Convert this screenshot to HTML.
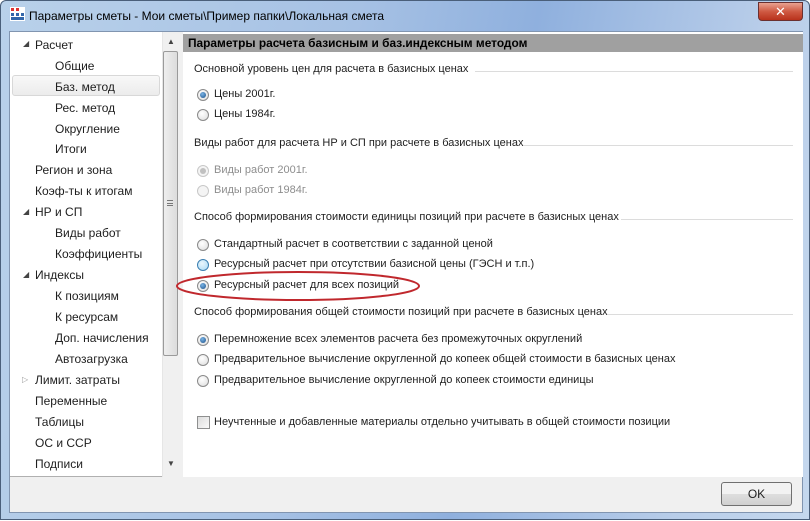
<!DOCTYPE html>
<html><head><meta charset="utf-8"><style>
*{margin:0;padding:0;box-sizing:border-box}
body{width:810px;height:520px;overflow:hidden;font-family:"Liberation Sans","DejaVu Sans",sans-serif;font-size:11px;color:#1e1e1e;background:#fff;position:relative}
.win{position:absolute;left:0;top:0;width:810px;height:520px;background:linear-gradient(100deg,#b9d1ea 0%,#a6c1e4 40%,#8fb0de 60%,#b8cde9 85%,#c5d8ee 100%);border:1px solid #4a5f7a;border-radius:6px 6px 0 0}
.title{position:absolute;left:28px;top:8px;font-size:12px;color:#000}
.close{position:absolute;left:757px;top:1px;width:45px;height:19px;border:1px solid #6a3030;border-radius:0 0 4px 4px;background:linear-gradient(#e8a291,#cf5a43 50%,#b8321c);color:#fff;font-weight:bold;font-size:13px;text-align:center;line-height:17px}
.client{position:absolute;left:8px;top:30px;width:794px;height:482px;background:#f0f0f0;border:1px solid #8195b0}
.tree{position:absolute;left:0;top:0;width:169px;height:445px;background:#fff;border-right:1px solid #b0b0b0;border-bottom:1px solid #b0b0b0}
.ti{position:absolute;height:20px;line-height:20px;font-size:12px}
.sel{position:absolute;left:2px;top:43px;width:148px;height:21px;border:1px solid #d8d8d8;border-radius:3px;background:linear-gradient(#f8f8f8,#ececec)}
.sb{position:absolute;left:152px;top:0;width:17px;height:445px;background:#f0f0f0;border-left:1px solid #e6e6e6}
.thumb{position:absolute;left:153px;top:19px;width:15px;height:305px;border:1px solid #9a9a9a;border-radius:2px;background:linear-gradient(90deg,#eee,#dcdcdc)}
.right{position:absolute;left:173px;top:0;width:620px;height:445px;background:#fff}
.hdr{position:absolute;left:0;top:2px;width:620px;height:18px;background:#a0a0a0;font-weight:bold;font-size:11.9px;line-height:18px;padding-left:5px;color:#000}
.t{position:absolute;white-space:nowrap;font-size:11px}
.ln{position:absolute;height:1px;background:#dcdcdc}
.r{position:absolute;width:12px;height:12px;border-radius:50%;border:1px solid #8a8a8a;background:radial-gradient(circle at 40% 35%,#fff,#dcdcdc)}
.r.on::after{content:"";position:absolute;left:2px;top:2px;width:6px;height:6px;border-radius:50%;background:radial-gradient(circle at 40% 35%,#7ab4e6,#1a4f88)}
.r.dis{border-color:#c8c8c8;background:#f4f4f4}
.r.dis.on::after{background:#c0c0c0}
.r.hov{border-color:#3c7fb1;background:radial-gradient(circle at 40% 35%,#eaf6fd,#a7d9f5)}
.g{color:#8d8d8d}
.cb{position:absolute;width:13px;height:13px;border:1px solid #8e8f8f;background:linear-gradient(135deg,#dcdcdc,#fafafa)}
.ok{position:absolute;left:711px;top:450px;width:71px;height:24px;border:1px solid #707070;border-radius:3px;background:linear-gradient(#f2f2f2 50%,#dedede 50%,#d0d0d0);text-align:center;line-height:22px;font-size:12px}
.ar{position:absolute;font-size:8px;color:#444}
</style></head><body>
<div class="win">
 <svg style="position:absolute;left:9px;top:6px" width="15" height="14"><rect x="0" y="0" width="15" height="14" fill="#fff"/><g fill="#d33"><rect x="1" y="1" width="3" height="3"/><rect x="6" y="1" width="3" height="3"/></g><g fill="#36a"><rect x="1" y="6" width="3" height="3"/><rect x="6" y="6" width="3" height="3"/><rect x="11" y="6" width="3" height="3"/><rect x="1" y="10" width="13" height="3"/></g></svg>
 <div class="title">Параметры сметы - Мои сметы\Пример папки\Локальная смета</div>
 <div class="close">✕</div>
 <div class="client">
  <div class="tree">
   <div class="sel"></div>
   <div class="ar" style="left:13px;top:7px">◢</div>
   <div class="ti" style="left:25px;top:3px">Расчет</div>
   <div class="ti" style="left:45px;top:24px">Общие</div>
   <div class="ti" style="left:45px;top:45px">Баз. метод</div>
   <div class="ti" style="left:45px;top:66px">Рес. метод</div>
   <div class="ti" style="left:45px;top:87px">Округление</div>
   <div class="ti" style="left:45px;top:107px">Итоги</div>
   <div class="ti" style="left:25px;top:128px">Регион и зона</div>
   <div class="ti" style="left:25px;top:149px">Коэф-ты к итогам</div>
   <div class="ar" style="left:13px;top:175px">◢</div>
   <div class="ti" style="left:25px;top:170px">НР и СП</div>
   <div class="ti" style="left:45px;top:191px">Виды работ</div>
   <div class="ti" style="left:45px;top:212px">Коэффициенты</div>
   <div class="ar" style="left:13px;top:238px">◢</div>
   <div class="ti" style="left:25px;top:233px">Индексы</div>
   <div class="ti" style="left:45px;top:254px">К позициям</div>
   <div class="ti" style="left:45px;top:275px">К ресурсам</div>
   <div class="ti" style="left:45px;top:296px">Доп. начисления</div>
   <div class="ti" style="left:45px;top:317px">Автозагрузка</div>
   <div class="ar" style="left:12px;top:343px;color:#999">▷</div>
   <div class="ti" style="left:25px;top:338px">Лимит. затраты</div>
   <div class="ti" style="left:25px;top:359px">Переменные</div>
   <div class="ti" style="left:25px;top:380px">Таблицы</div>
   <div class="ti" style="left:25px;top:401px">ОС и ССР</div>
   <div class="ti" style="left:25px;top:422px">Подписи</div>
   <div class="sb"></div>
   <div class="ar" style="left:157px;top:5px">▲</div>
   <div class="thumb"></div>
   <div class="ar" style="left:157px;top:427px">▼</div>
   <div style="position:absolute;left:157px;top:168px;width:6px;height:6px;border-top:1px solid #777;border-bottom:1px solid #777"></div>
   <div style="position:absolute;left:157px;top:171px;width:6px;height:1px;background:#777"></div>
  </div>
  <div class="right">
   <div class="hdr">Параметры расчета базисным и баз.индексным методом</div>
   <div class="t" style="left:11px;top:31px">Основной уровень цен для расчета в базисных ценах</div>
   <div class="ln" style="left:292px;top:39px;width:318px"></div>
   <div class="r on" style="left:14px;top:57px"></div><div class="t" style="left:31px;top:56px">Цены 2001г.</div>
   <div class="r" style="left:14px;top:77px"></div><div class="t" style="left:31px;top:76px">Цены 1984г.</div>
   <div class="t" style="left:11px;top:105px">Виды работ для расчета НР и СП при расчете в базисных ценах</div>
   <div class="ln" style="left:340px;top:113px;width:270px"></div>
   <div class="r dis on" style="left:14px;top:133px"></div><div class="t g" style="left:31px;top:132px">Виды работ 2001г.</div>
   <div class="r dis" style="left:14px;top:153px"></div><div class="t g" style="left:31px;top:152px">Виды работ 1984г.</div>
   <div class="t" style="left:11px;top:179px">Способ формирования стоимости единицы позиций при расчете в базисных ценах</div>
   <div class="ln" style="left:438px;top:187px;width:172px"></div>
   <div class="r" style="left:14px;top:207px"></div><div class="t" style="left:31px;top:206px">Стандартный расчет в соответствии с заданной ценой</div>
   <div class="r hov" style="left:14px;top:227px"></div><div class="t" style="left:31px;top:226px">Ресурсный расчет при отсутствии базисной цены (ГЭСН и т.п.)</div>
   <div class="r on" style="left:14px;top:248px"></div><div class="t" style="left:31px;top:247px">Ресурсный расчет для всех позиций</div>
   <div class="t" style="left:11px;top:274px">Способ формирования общей стоимости позиций при расчете в базисных ценах</div>
   <div class="ln" style="left:425px;top:282px;width:185px"></div>
   <div class="r on" style="left:14px;top:302px"></div><div class="t" style="left:31px;top:301px">Перемножение всех элементов расчета без промежуточных округлений</div>
   <div class="r" style="left:14px;top:322px"></div><div class="t" style="left:31px;top:321px">Предварительное вычисление округленной до копеек общей стоимости в базисных ценах</div>
   <div class="r" style="left:14px;top:343px"></div><div class="t" style="left:31px;top:342px">Предварительное вычисление округленной до копеек стоимости единицы</div>
   <div class="cb" style="left:14px;top:384px"></div><div class="t" style="left:31px;top:384px">Неучтенные и добавленные материалы отдельно учитывать в общей стоимости позиции</div>
  </div>
  <div class="ok">OK</div>
 </div>
 <svg style="position:absolute;left:0;top:0" width="810" height="520"><ellipse cx="297" cy="285" rx="121" ry="14" fill="none" stroke="#c0282d" stroke-width="2"/></svg>
</div>
</body></html>
